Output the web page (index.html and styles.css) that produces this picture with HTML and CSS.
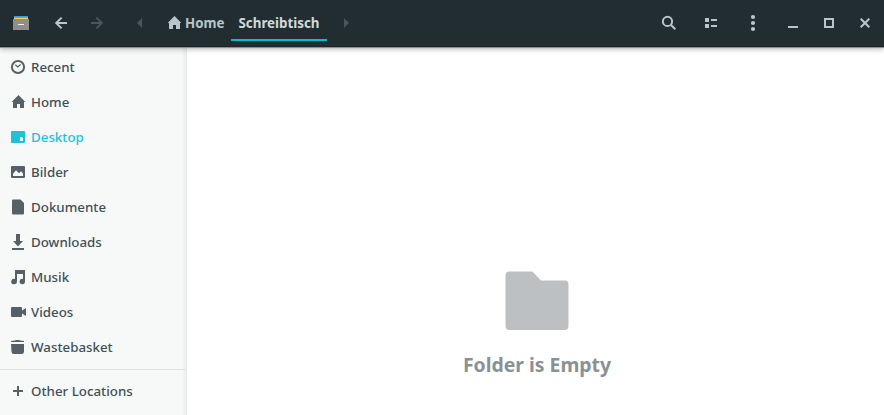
FILE: index.html
```html
<!DOCTYPE html>
<html lang="en">
<head>
<meta charset="utf-8">
<title>Schreibtisch</title>
<link rel="stylesheet" href="styles.css">
</head>
<body>
<header class="headerbar">
  <svg class="app" viewBox="0 0 16 16"><g shape-rendering="crispEdges"><path fill="#4a90e8" d="M1 0h14v1H1z"/><path fill="#58b5a0" d="M1 1h14v1H1z"/><path fill="#fdd13c" d="M1 2h14v1H1z"/><path fill="#8e8e8e" d="M0 3h16v11H0z"/><path fill="#f2f2f2" d="M5 8h6v1H5z"/></g></svg>
  <nav class="history">
    <svg viewBox="0 0 16 16"><path class="line" d="M14 8H3.2M8.6 2.6 3.2 8l5.4 5.4"/></svg>
    <svg class="dim" viewBox="0 0 16 16"><path class="line" d="M2 8h10.8M7.4 2.6 12.8 8l-5.4 5.4"/></svg>
  </nav>
  <nav class="path">
    <svg class="dim" viewBox="0 0 16 16"><path d="M10 3v10L5 8z"/></svg>
    <div class="crumb home"><svg viewBox="0 0 16 16"><path d="M8.5 1 1.6 8H3v6h4v-4h3v4h4V8h1.4z"/></svg><span>Home</span></div>
    <div class="crumb current">Schreibtisch</div>
    <svg class="dim" viewBox="0 0 16 16"><path d="M5 3v10l5-5z"/></svg>
  </nav>
  <div class="tools">
    <svg viewBox="0 0 16 16"><circle class="line" cx="6.5" cy="6.4" r="4.6"/><path class="line" d="m9.8 9.8 4.5 4.5"/></svg>
    <svg viewBox="0 0 16 16"><path d="M2 3h4v4H2zM2 9h4v4H2zM8 4h6v2H8zM8 10h6v2H8z"/></svg>
    <svg viewBox="0 0 16 16"><circle cx="8" cy="2" r="2.1"/><circle cx="8" cy="8" r="2.1"/><circle cx="8" cy="14" r="2.1"/></svg>
  </div>
  <div class="controls">
    <svg viewBox="0 0 16 16"><path d="M3 11h10v2H3z"/></svg>
    <svg viewBox="0 0 16 16"><path class="line" d="M4 4h8v8H4z"/></svg>
    <svg viewBox="0 0 16 16"><path class="line" d="m3.7 3.7 8.6 8.6m0-8.6-8.6 8.6"/></svg>
  </div>
</header>
<div class="body">
  <aside class="sidebar">
    <ul class="places">
      <li><svg viewBox="0 0 16 16"><circle class="line" cx="8" cy="8" r="6.1"/><path class="thin" d="m5.3 5.8 2.5 2.2 2.8-2.4"/></svg>Recent</li>
      <li><svg viewBox="0 0 16 16"><path d="M8.5 1 1.6 8H3v6h4v-4h3v4h4V8h1.4z"/></svg>Home</li>
      <li class="active"><svg viewBox="0 0 16 16"><path fill-rule="evenodd" d="M2 2h12q1 0 1 1v10q0 1-1 1H2q-1 0-1-1V3q0-1 1-1zm8 6v4h3V9.3L11.7 8z"/></svg>Desktop</li>
      <li><svg viewBox="0 0 16 16"><path fill-rule="evenodd" d="M2 2h12q1 0 1 1v10q0 1-1 1H2q-1 0-1-1V3q0-1 1-1zm1 10h10V9.5l-2-2.2-2 2L6 6.3 3 9.8z"/></svg>Bilder</li>
      <li><svg viewBox="0 0 16 16"><path d="M3 .5h7.5L14 4v10.5q0 1-1 1H3q-1 0-1-1v-13q0-1 1-1z"/></svg>Dokumente</li>
      <li><svg viewBox="0 0 16 16"><path d="M6 0h4v7h3l-5 5.5L3 7h3zM2 14h12v2H2z"/></svg>Downloads</li>
      <li><svg viewBox="0 0 16 16"><path d="M5 1h10v11.5a2.7 2.7 0 1 1-2-2.6V5H7v7.5a2.9 2.7 0 1 1-2-2.6z"/></svg>Musik</li>
      <li><svg viewBox="0 0 16 16"><path d="M2 3h9q1 0 1 1v2.5L16 4v8l-4-2.5V12q0 1-1 1H2q-1 0-1-1V4q0-1 1-1z"/></svg>Videos</li>
      <li><svg viewBox="0 0 16 16"><path d="M1 3V2l4-.5L6 1h3l1 .5 4 .5v1zM1 5h13v7.5q-.2 2.5-2.2 2.5H3.700q-2 0-2.200-2.500z"/></svg>Wastebasket</li>
    </ul>
    <div class="other"><svg viewBox="0 0 16 16"><path d="M7 3h2v4h4v2H9v4H7V9H3V7h4z"/></svg>Other Locations</div>
  </aside>
  <main class="content">
    <svg class="folder" viewBox="0 0 64 59"><path d="M4 .5h23.5L36 9.500h24q3.500 0 3.500 4V55q0 4-4 4h-55q-4 0-4-4V4.500q0-4 3.500-4z"/></svg>
    <p>Folder is Empty</p>
  </main>
</div>
</body>
</html>
```
FILE: styles.css
```css
* { box-sizing: border-box; }
body {
  margin: 0;
  height: 415px;
  display: flex;
  flex-direction: column;
  overflow: hidden;
  background: #fff;
  font: 500 13.33px/20px "Noto Sans", sans-serif;
}
svg { display: block; flex: none; width: 16px; height: 16px; fill: currentColor; overflow: visible; }
.line { fill: none; stroke: currentColor; stroke-width: 2; }
.thin { fill: none; stroke: currentColor; stroke-width: 1.3; }

.headerbar {
  position: relative;
  z-index: 1;
  flex: none;
  height: 47px;
  padding: 0 11px 1px 13px;
  display: flex;
  align-items: center;
  color: #b8c5c9;
  background: #222d32;
  box-shadow: inset 0 -1px #1b2529, 0 1px #8f8f91, 0 1px 6px rgba(0, 0, 0, .42);
}
.app { margin-top: 2px; }
.history { display: flex; gap: 20px; margin-left: 24px; }
.path { display: flex; align-items: center; margin-left: 27px; height: 100%; font-weight: 700; }
.dim { color: #4a565b; }
.crumb { display: flex; align-items: center; height: 36px; }
.home { width: 72px; margin-left: 11px; padding-left: 7px; gap: 3px; }
.current { width: 96px; justify-content: center; color: #cfd9dc; box-shadow: inset 0 -2px #00bcd4; margin-right: 12px; }
.tools { display: flex; gap: 26px; margin-left: auto; }
.controls { display: flex; gap: 20px; margin-left: 24px; }

.body { flex: 1; display: flex; min-height: 0; }
.sidebar {
  width: 187px;
  flex: none;
  padding-top: 2px;
  color: #425056;
  background: linear-gradient(to right, transparent 182px, #e8eaea 187px), #f7f9f9;
}
.sidebar svg { color: #566167; }
.places { margin: 0; padding: 0; list-style: none; }
.places li, .other { display: flex; align-items: center; height: 35px; gap: 5px; padding-left: 10px; }
.places .active, .places .active svg { color: #1dc1d8; }
.other { height: 42px; margin: 5px 1px 0 0; border-top: 1px solid #dfe2e2; }

.content { flex: 1; display: flex; flex-direction: column; align-items: center; padding: 224px 0 0 3px; }
.folder { width: 64px; height: 59px; color: #bcc0c3; }
.content p { margin: 21px 0 0; color: #899194; font-size: 19.4px; line-height: 28px; font-weight: 700; }
```
